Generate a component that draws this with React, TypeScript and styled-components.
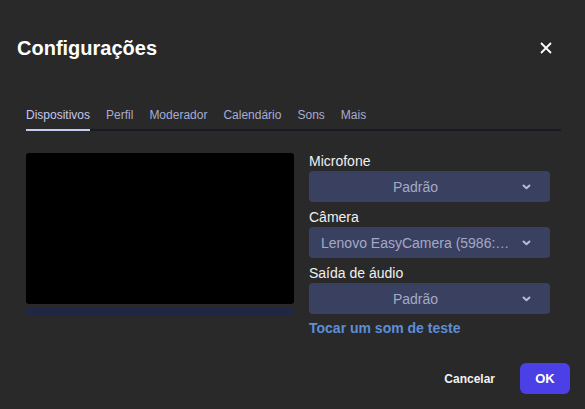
import React from 'react';
import styled, { createGlobalStyle } from 'styled-components';

const GlobalStyle = createGlobalStyle`
  html, body {
    margin: 0;
    padding: 0;
    background: #292929;
    font-family: "Liberation Sans", Arial, sans-serif;
  }
`;

const Dialog = styled.div`
  width: 585px;
  height: 409px;
  box-sizing: border-box;
  display: flex;
  flex-direction: column;
  background: #292929;
`;

const Header = styled.div`
  display: flex;
  align-items: center;
  justify-content: space-between;
  padding: 36px 31px 0 17px;
  height: 24px;
`;

const Title = styled.h1`
  margin: 0;
  font-size: 20px;
  font-weight: 700;
  color: #ffffff;
`;

const CloseButton = styled.button`
  border: 0;
  background: none;
  padding: 0;
  width: 16px;
  height: 16px;
  display: flex;
  align-items: center;
  justify-content: center;
  cursor: pointer;
`;

const Tabs = styled.div`
  display: flex;
  gap: 16px;
  margin: 48px 24px 0 26px;
  border-bottom: 2px solid #171a27;
`;

const Tab = styled.div<{ $active?: boolean }>`
  font-size: 12px;
  padding-bottom: 7px;
  margin-bottom: -2px;
  color: ${(p) => (p.$active ? '#c3c8f0' : '#a8acd0')};
  border-bottom: 2px solid ${(p) => (p.$active ? '#c3cdf0' : 'transparent')};
`;

const Body = styled.div`
  display: flex;
  gap: 15px;
  padding: 22px 35px 0 26px;
`;

const PreviewColumn = styled.div`
  width: 268px;
  flex-shrink: 0;
  display: flex;
  flex-direction: column;
  gap: 4px;
`;

const Video = styled.div`
  height: 151px;
  background: #000;
  border-radius: 3px;
`;

const LevelBar = styled.div`
  height: 8px;
  background: #212643;
  border-radius: 2px;
`;

const Fields = styled.div`
  flex: 1;
  min-width: 0;
  display: flex;
  flex-direction: column;
`;

const Label = styled.div`
  font-size: 14px;
  color: #f0f0f0;
  line-height: 16px;
  margin-bottom: 2px;
  margin-top: 0;
  &:not(:first-child) {
    margin-top: 7px;
  }
`;

const Select = styled.div`
  height: 31px;
  background: #3a4060;
  border-radius: 4px;
  display: flex;
  align-items: center;
  padding: 0 19px 0 12px;
  gap: 12px;
`;

const SelectText = styled.span`
  flex: 1;
  min-width: 0;
  text-align: center;
  font-size: 14px;
  color: #a4aac6;
  white-space: nowrap;
  overflow: hidden;
  text-overflow: ellipsis;
`;

const TestLink = styled.a`
  margin-top: 6px;
  font-size: 14px;
  font-weight: 700;
  color: #5d8ed8;
  text-decoration: none;
`;

const Footer = styled.div`
  margin-top: auto;
  display: flex;
  justify-content: flex-end;
  align-items: center;
  gap: 25px;
  padding: 0 15px 15px 0;
`;

const CancelButton = styled.button`
  border: 0;
  background: none;
  padding: 0;
  font-family: inherit;
  font-size: 12px;
  font-weight: 700;
  color: #f2f2f2;
`;

const OkButton = styled.button`
  border: 0;
  width: 50px;
  height: 31px;
  border-radius: 6px;
  background: #4a40e6;
  color: #fff;
  font-family: inherit;
  font-size: 13px;
  font-weight: 700;
`;

const Chevron = () => (
  <svg width="9" height="6" viewBox="0 0 9 6">
    <path d="M1.5 1.5 L4.5 4.3 L7.5 1.5" fill="none" stroke="#b7bcd8" strokeWidth="2" strokeLinecap="round" strokeLinejoin="round" />
  </svg>
);

const CloseIcon = () => (
  <svg width="12" height="12" viewBox="0 0 12 12">
    <path d="M1 1 L11 11 M11 1 L1 11" stroke="#ffffff" strokeWidth="1.8" />
  </svg>
);

const tabs = ['Dispositivos', 'Perfil', 'Moderador', 'Calendário', 'Sons', 'Mais'];

const fields = [
  { label: 'Microfone', value: 'Padrão' },
  { label: 'Câmera', value: 'Lenovo EasyCamera (5986:0705)' },
  { label: 'Saída de áudio', value: 'Padrão' },
];

export default function App() {
  return (
    <>
      <GlobalStyle />
      <Dialog>
        <Header>
          <Title>Configurações</Title>
          <CloseButton aria-label="Fechar">
            <CloseIcon />
          </CloseButton>
        </Header>
        <Tabs>
          {tabs.map((t, i) => (
            <Tab key={t} $active={i === 0}>
              {t}
            </Tab>
          ))}
        </Tabs>
        <Body>
          <PreviewColumn>
            <Video />
            <LevelBar />
          </PreviewColumn>
          <Fields>
            {fields.map((f) => (
              <React.Fragment key={f.label}>
                <Label>{f.label}</Label>
                <Select>
                  <SelectText>{f.value}</SelectText>
                  <Chevron />
                </Select>
              </React.Fragment>
            ))}
            <TestLink href="#">Tocar um som de teste</TestLink>
          </Fields>
        </Body>
        <Footer>
          <CancelButton>Cancelar</CancelButton>
          <OkButton>OK</OkButton>
        </Footer>
      </Dialog>
    </>
  );
}
